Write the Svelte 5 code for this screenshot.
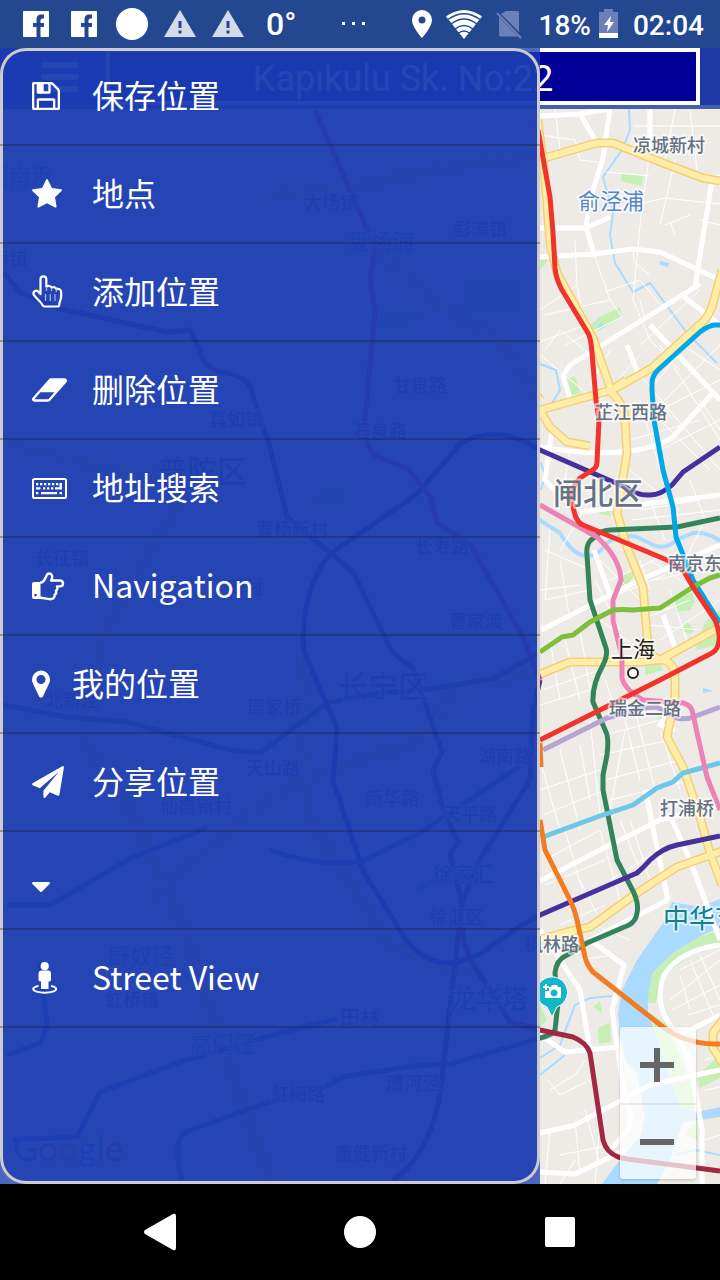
<script>
  const items = [
    { label: '保存位置', icon: 'save' },
    { label: '地点', icon: 'star' },
    { label: '添加位置', icon: 'pointer' },
    { label: '删除位置', icon: 'eraser' },
    { label: '地址搜索', icon: 'keyboard' },
    { label: 'Navigation', icon: 'hand' },
    { label: '我的位置', icon: 'marker' },
    { label: '分享位置', icon: 'plane' },
    { label: '', icon: 'caret' },
    { label: 'Street View', icon: 'street' }
  ];

  const icons = {
    save: { w: 28, h: 28, box: '128 128 1536 1536', d: 'M512 1536h768v-384h-768v384zm896 0h128v-896q0-14-10-38.5t-20-34.5l-281-281q-10-10-34-20t-39-10v416q0 40-28 68t-68 28h-576q-40 0-68-28t-28-68v-416h-128v1280h128v-416q0-40 28-68t68-28h832q40 0 68 28t28 68v416zm-384-928v-320q0-13-9.5-22.5t-22.5-9.5h-192q-13 0-22.5 9.5t-9.5 22.5v320q0 13 9.5 22.5t22.5 9.5h192q13 0 22.5-9.5t9.5-22.5zm640 32v928q0 40-28 68t-68 28h-1344q-40 0-68-28t-28-68v-1344q0-40 28-68t68-28h928q40 0 88 20t76 48l280 280q28 28 48 76t20 88z' },
    star: { w: 30, h: 30, box: '64 32 1664 1664', d: 'M1728 647q0 22-26 48l-363 354 86 500q1 7 1 20 0 21-10.5 35.5t-30.5 14.5q-19 0-40-12l-449-236-449 236q-22 12-40 12-21 0-31.5-14.5t-10.5-35.5q0-6 2-20l86-500-364-354q-25-27-25-48 0-37 56-46l502-73 225-455q19-41 49-41t49 41l225 455 502 73q56 9 56 46z' },
    eraser: { w: 35, h: 24, box: '-64 256 1920 1280', d: 'M832 1408l336-384h-768l-336 384h768zm1013-1077q15 34 9.5 71.5t-30.5 65.5l-896 1024q-38 44-96 44h-768q-38 0-69.5-20.5t-47.5-54.5q-15-34-9.5-71.5t30.5-65.5l896-1024q38-44 96-44h768q38 0 69.5 20.5t47.5 54.5z' },
    marker: { w: 18, h: 28, box: '384 128 1024 1536', d: 'M1152 640q0-106-75-181t-181-75-181 75-75 181 75 181 181 75 181-75 75-181zm256 0q0 109-33 179l-364 774q-16 33-47.5 52t-67.5 19-67.5-19-46.5-52l-365-774q-33-70-33-179 0-212 150-362t362-150 362 150 150 362z' },
    plane: { w: 32, h: 32, box: '0 0 1792 1792', d: 'M1764 11q33 24 27 64l-256 1536q-5 29-32 45-14 8-31 8-11 0-24-5l-453-185-242 295q-18 23-49 23-13 0-22-4-19-7-30.5-23.5t-11.5-36.5v-349l864-1059-1069 925-395-162q-37-14-40-55-2-40 32-59l1664-960q15-9 32-9 20 0 36 11z' },
    caret: { w: 18, h: 10, box: '384 640 1024 576', d: 'M1408 704q0 26-19 45l-448 448q-19 19-45 19t-45-19l-448-448q-19-19-19-45t19-45 45-19h896q26 0 45 19t19 45z' }
  };

  const keys = [5, 9, 13, 17, 21, 25];

  // Transit lines: colour and route
  const transit = [
    ['#33845b', 'M720 518L677 527L610 530Q600 531 597 535L590 541Q586 546 587 555L590 600L606 648Q608 655 603 665Q592 685 593 702L606 732Q609 738 607 755L603 775V790L617 860L634 893Q639 905 637 913Q636 921 629 925L587 943L567 955Q556 960 555 973L558 1003L555 1030Q553 1035 540 1038L450 1064L413 1066L343 1077L325 1087L267 1103L190 1130Q180 1133 178 1145V1163L182 1180'],
    ['#33845b', 'M3 705L67 717L127 722L230 750L260 753L327 703L380 693L430 689L493 679L537 654'],
    ['#b4a5d2', 'M543 750L607 718L643 708L657 707Q667 714 677 718Q687 720 693 717L720 707'],
    ['#6fc7e8', 'M420 890L440 875M543 837L597 817L633 805Q643 798 657 788L673 782L683 773L720 763'],
    ['#45309c', 'M720 447L683 472L672 485Q661 495 650 495Q638 496 627 488L540 450Q497 422 460 444L417 494L330 554Q305 585 303 637Q303 650 305 654L337 728L333 780L363 871L403 935Q420 963 450 963Q470 960 483 952L517 928L540 915L637 873Q645 866 650 860Q663 848 677 845L720 836'],
    ['#5a2795', 'M3 272L20 292L57 308L167 332L190 330L200 350Q202 366 220 372Q243 375 250 386L270 448L287 517L353 572L385 637Q390 654 413 668L442 752L433 770L443 808L458 843L450 854L462 903L443 1068Q437 1150 393 1180'],
    ['#5a2795', 'M462 903L477 864L530 780L533 710L540 680'],
    ['#3c70c8', 'M7 905H50L133 857L207 828M270 850Q320 868 363 861L420 833L520 766M7 1055L40 1043L47 1027L40 963M13 1140L77 1137L100 1092L180 1062L280 1033L337 1019'],
    ['#e83a80', 'M315 110L350 190L375 248L370 279L375 313L365 417Q363 450 380 458L407 468L430 496L437 523L470 544L523 637L540 680'],
    ['#00a8e8', 'M720 325H714Q708 326 700 332L658 370Q652 376 652 383V390L654 420L663 470L673 507L676 537L693 580L720 623'],
    ['#ef82b5', 'M540 505L597 537Q620 558 621 580L613 600V620L622 657V678Q625 690 643 700L683 703Q690 705 692 710L707 777L720 810'],
    ['#7bbf3a', 'M540 652L562 637L573 635L590 622L613 610Q622 609 633 610L660 608L693 587L710 578L720 575'],
    ['#f1332b', 'M538 130L550 197L553 233L555 268Q556 279 562 290L588 333Q591 338 592 353L596 400L599 420L597 462Q597 468 591 471L580 478Q570 488 572 503L575 515Q578 523 583 525L667 560L683 570L693 587L715 620Q720 632 719 640Q718 650 712 653L660 680L540 740'],
    ['#f37b20', 'M540 743L541 767M540 820L545 850L570 900Q575 910 577 920L585 957Q587 965 593 972L663 1027Q673 1034 680 1037Q700 1045 720 1044'],
    ['#a12840', 'M462 928Q465 955 480 975L500 1005L510 1022L540 1030L573 1037Q587 1043 590 1053L593 1073L603 1140Q606 1152 618 1157L627 1159L697 1168L720 1171']
  ];

  const highways = [
    'M538 120L545 180L550 243L557 273L593 338L612 393Q625 405 625 420L627 453L617 513L627 547L643 587L648 647Q650 658 663 660Q675 663 675 677V697L667 737L683 767L700 817L710 853L722 885',
    'M538 160L565 152L597 143H613L663 163L703 178L720 181',
    'M722 271L712 307Q707 320 697 327L653 367Q635 378 612 390L540 410M612 390L626 380',
    'M541 412L550 427L567 442L590 446',
    'M538 675L570 662H640L660 660L722 626',
    'M538 940L567 932L590 927L637 893L677 867L722 851',
    'M724 1018L713 1033V1048L724 1065',
    'M270 196L350 188L430 170L540 155M375 248L430 300L500 340L540 400',
    'M0 440L160 480L180 500L100 640L88 750Q120 790 135 820L185 930L220 1040L270 1180',
    'M150 900L240 820L300 780L410 745L460 690L540 670M300 650L305 760L310 820L390 945L470 975'
  ];

  const streets = [
    'M540 116L580 114L610 109L603 158L590 200L586 227L594 254M580 114L596 141M540 228H586L610 217M540 257L594 254L633 249L660 252L720 280',
    'M720 175L711 186L695 287L570 365L563 376L570 398M570 365L700 284M683 296L720 325M650 325L720 400M627 345L640 379M650 109V150',
    'M540 447Q630 462 672 438L712 394M552 430L545 480L570 505M580 512L720 495M594 550L612 600M541 630L640 580L720 545M663 615L678 655',
    'M540 881L600 850L640 830L660 820L720 805M645 790L668 900M672 820L690 860L705 900L720 940M668 900L590 940M675 700L660 725L675 730',
    'M540 930L580 990L590 1050M590 940L624 965L612 1010L625 1100Q635 1115 628 1130L610 1150M540 1035L565 1052L620 1047M540 1133L575 1125L650 1085L720 1070M540 1172L575 1174L625 1150',
    'M720 945Q680 950 664 975Q655 1000 667 1020L690 1060L702 1130V1184M680 1035L720 1015',
    'M300 140L420 125L540 118M290 300L440 330L540 345M430 310L420 420L440 470M280 350L360 370L470 400L540 410M330 590L400 620L480 610M60 360L200 390L280 400M100 150L95 260L60 500L80 620M230 230L210 350L160 440'
  ];

  const alleys = [
    'M555 109L560 150M634 126H720M675 109L665 160M690 110L697 170M540 135L575 140L580 160L597 162M606 172L650 176M650 150L640 225L633 300M675 160L660 225M613 210L665 198L720 204',
    'M575 240L577 285L540 310M594 254L610 300L622 317M633 249L634 262L650 275M665 225L690 215M605 292L640 280L665 310M610 300L545 315M700 220L720 225M670 222L675 235M577 285L585 325L540 342',
    'M597 360L560 330L545 350M622 317L565 345M633 300L650 340L680 370M640 345L700 290M610 350L590 385M540 355L595 400M640 300L645 320',
    'M640 355L600 400M660 345L720 440M675 340L720 370M690 340L650 390M720 345L655 410M720 380L640 420M700 400L720 430M640 375L720 470M660 420L710 470M630 440L700 420M660 450L720 420',
    'M640 400L660 470M630 470L680 510M640 510L700 500M650 500L665 540M690 480L705 520L685 560M632 520L720 510M570 450L565 480M590 500L560 550M545 550L590 570M550 530L545 600L590 590M560 560L570 620M540 590L580 585',
    'M600 560L640 600M595 580L620 630M605 600L665 575M610 580L655 560M640 560L650 590M620 550L640 545M650 560L710 600M655 580L700 570M640 620L690 600M670 590L690 650M650 625L700 630M660 640L720 600M600 620L640 650',
    'M550 640L560 700M565 640L580 700M580 630L590 690M543 690L600 670M540 705L590 690M605 680L620 720M620 700L640 780M635 710L655 790M605 735L660 720M600 755L670 740M605 780L680 760M610 800L690 780M660 730L680 790',
    'M540 760L560 830M560 750L580 830M580 745L590 800M540 790L600 770M543 815L605 790M600 830L620 900M565 830L585 900M545 860L600 830M545 885L605 860M580 880L600 920M620 820L640 870M650 800L660 860M610 880L660 850',
    'M590 720L600 815M625 730L610 810M630 820L650 880M605 905L560 925M595 925L630 940M550 1090L575 1075L585 1060M548 1080L560 1095L590 1080M550 1130L545 1184M575 1120L580 1175M585 1110L600 1165M560 1155L610 1145M575 1160L560 1184M600 1120L595 1184',
    'M680 970L720 950M670 1000L720 960M672 1010L720 985M680 975L690 1010M690 960L715 1020M700 955L720 1000M688 1015L720 1005M705 1060L720 1055M705 1090L720 1087M705 1140L720 1135M540 950L570 945M580 960L612 955'
  ];

  const labels = [
    [633, 152, '凉城新村'], [578, 209, '俞泾浦', 22, 'water'], [595, 419, '芷江西路'],
    [553, 504, '闸北区', 30], [668, 570, '南京东路'], [611, 657, '上海', 22, 'city'],
    [609, 715, '瑞金二路'], [660, 815, '打浦桥'], [663, 928, '中华艺术宫', 26, 'sight'],
    [525, 951, '枫林路'], [-13, 184, '河南浜', 22, 'water'], [-27, 266, '江桥镇'],
    [304, 209, '大场镇'], [348, 249, '夏扬浦', 22, 'water'], [453, 236, '彭浦镇'],
    [393, 392, '甘泉路'], [353, 438, '石泉路'], [209, 426, '真如镇'],
    [157, 482, '普陀区', 30], [256, 536, '曹杨新村'], [35, 565, '长征镇'],
    [415, 553, '长寿路'], [227, 594, '新村'], [449, 628, '曹家渡'],
    [338, 697, '长宁区', 30], [45, 707, '北新泾'], [247, 714, '周家桥'],
    [478, 763, '湖南路'], [246, 775, '天山路'], [365, 805, '新华路'],
    [160, 813, '仙霞新村'], [443, 821, '天平路'], [433, 882, '徐家汇', 20, 'shop'],
    [430, 924, '徐汇区'], [108, 964, '野奴泾', 22, 'water'], [105, 1007, '虹桥镇'],
    [450, 1008, '龙华塔', 26, 'sight'], [340, 1025, '田林', 20], [190, 1052, '高门泾', 22, 'water'],
    [386, 1090, '漕河泾'], [271, 1101, '虹梅路'], [335, 1160, '康健新村']
  ];
</script>

<div class="screen">
  <header class="status">
    <div class="group notices">
      {#each [0, 1] as n (n)}
        <svg width="26" height="26" viewBox="0 0 26 26" aria-hidden="true"><path fill="#fff" d="M0 0H26V26H17.500V16H21V12H17.500V9.500Q17.500 7.500 19.500 7.500H21V3.500H18Q13.500 3.500 13.500 8.500V12H10V16H13.500V26H0z" /></svg>
      {/each}
      <svg class="dot" width="32" height="32" viewBox="0 0 32 32" aria-hidden="true"><circle cx="16" cy="16" r="16" fill="#fff" /></svg>
      {#each [0, 1] as n (n)}
        <svg class="warn" width="32" height="28" viewBox="0 0 32 28" aria-hidden="true"><path fill="#fff" fill-opacity=".8" fill-rule="evenodd" d="M16 0L32 27H0zM14.500 11V18H17.500V11zM14.500 20.500V23.500H17.500V20.500z" /></svg>
      {/each}
      <span class="temp">0°</span>
    </div>
    <svg class="more" width="24" height="4" viewBox="0 0 24 4" aria-hidden="true"><path fill="#fff" d="M0 0h3v3H0zM10 0h3v3h-3zM20 0h3v3h-3z" /></svg>
    <div class="group system">
      <svg width="20" height="28" viewBox="0 0 20 28" aria-hidden="true"><path fill="#fff" fill-rule="evenodd" d="M10 0A10 10 0 0 0 0 10C0 17 10 28 10 28S20 17 20 10A10 10 0 0 0 10 0zM10 6.500a3.500 3.500 0 1 1 0 7a3.500 3.500 0 0 1 0-7z" /></svg>
      <svg width="36" height="29" viewBox="0 0 36 29" aria-hidden="true">
        <path fill="#fff" d="M18 29L0 6.500Q18-6.500 36 6.500z" />
        <g fill="none" stroke="#244890" stroke-width="1.500"><path d="M2 9.500Q18-2 34 9.500M5 14Q18 4 31 14M9 19Q18 12 27 19M12 23.500Q18 18.500 24 23.500" /></g>
      </svg>
      <svg width="28" height="30" viewBox="0 0 28 30" aria-hidden="true"><path fill="#6b80b9" d="M10 2H21Q23 2 23 4V23L5 5zM3 8L22 27.500H5Q3 27.500 3 25.500z" /><path d="M1 4L25 29" stroke="#6b80b9" stroke-width="2" /></svg>
      <span class="battery">18%</span>
      <svg width="20" height="30" viewBox="0 0 20 30" aria-hidden="true"><path fill="#6b80b9" d="M5 0h9v3h5v22H0V3h5z" /><path fill="#fff" d="M0 24h19v5H0zM12 7L5 16h4l-1 7 7-10h-4z" /></svg>
      <time>02:04</time>
    </div>
  </header>

  <div class="stage">
    <main class="app">
      <div class="bar">
        <button class="burger" aria-label="Menu"><i></i><i></i><i></i></button>
        <input class="address" aria-label="Address" value="Kapıkulu Sk. No:22" readonly />
      </div>
      <div class="map">
        <svg class="tiles" viewBox="0 109 720 1075" preserveAspectRatio="xMinYMin slice" lang="zh-CN">
          <rect y="109" width="720" height="1200" fill="#eeebe7" />
          <g fill="#c5efb5">
            <path d="M622 173L643 175L642 186L621 181zM586 328L600 317L620 307L622 317L600 330L590 333zM567 379L575 376L580 393L569 396zM540 260L549 259L540 270zM592 505L610 508L611 516L600 514zM624 575L635 571L630 583L620 588z" />
            <path d="M673 600L692 592L695 602L690 610L676 612zM680 630L687 622L695 630L690 634zM705 622L720 610V645L695 650zM645 665L660 662L663 670L645 675zM657 713L670 716L668 721H659z" />
            <path d="M648 1003V975L670 955L697 938L720 930V946L690 955L665 975L655 1003zM598 1028L610 1023L611 1042L599 1044zM540 1005L547 1020L540 1027zM650 1013L667 1024L690 1080L695 1110L680 1107zM697 1076L720 1055V1078L700 1088zM685 1135L697 1120V1140zM593 1007L600 1001L602 1013z" />
            <path d="M380 310H420V330H380zM470 280H520V310H460zM320 490H345V505H315z" />
          </g>
          <path fill="#aadaff" d="M720 899L700 907L672 902L663 923L637 960L622 990L618 1013L620 1037L627 1063L637 1073L645 1117L640 1137L620 1160L602 1184H657L670 1160L683 1122L720 1117V1107L697 1112L680 1107L670 1077L658 1040L648 1013V997L652 973L673 953L697 938L720 927zM660 261L669 263L668 267L660 265zM596 328L602 322L604 328zM703 688L714 691L703 693z" />
          <g fill="none" stroke="#aadaff" stroke-linejoin="round">
            <path stroke-width="2" d="M629 109L630 130L622 150L603 177L613 213L610 235L615 263L633 292L650 283L687 333L717 363M540 364L556 370L560 390L548 410M541 463L545 475L541 490M540 1058L560 1045L575 1005L590 998L612 996M540 1075L565 1055M675 1155L695 1150L720 1155" />
            <path stroke-width="4" d="M538 519L560 533Q572 553 582 555Q596 559 605 545Q616 533 637 537L655 546Q668 549 676 540L693 533Q706 531 720 541" />
          </g>
          <g fill="none" stroke="#fff" stroke-linejoin="round">
            <g stroke-width="1">{#each alleys as d (d)}<path {d} />{/each}</g>
            <g stroke-width="5">{#each streets as d (d)}<path {d} />{/each}</g>
          </g>
          <g fill="none" stroke="#f5cf72" stroke-width="9" stroke-linejoin="round">{#each highways as d (d)}<path {d} />{/each}</g>
          <g fill="none" stroke="#ffeeaa" stroke-width="6" stroke-linejoin="round">{#each highways as d (d)}<path {d} />{/each}</g>
          <g fill="none" stroke-width="5" stroke-linejoin="round">{#each transit as [stroke, d] (d)}<path {stroke} {d} />{/each}</g>
          <g class="labels">
            {#each labels as [x, y, name, size = 18, kind = 'area'] (name)}
              <text {x} {y} font-size={size} class={kind}>{name}</text>
            {/each}
          </g>
          <circle cx="633" cy="673" r="5" fill="#fff" stroke="#222" stroke-width="2" />
          <path fill="#12b5cb" stroke="#fff" stroke-width="1" d="M552 1017L547 1007A15.500 15.500 0 1 1 557 1007z" />
          <path fill="#fff" fill-rule="evenodd" d="M549 987H551L552 985H557L558 987H561V998H545V991H549zM554 989.500a3.500 3.500 0 1 0 .1 0zM545 984h2v2h2v2h-2v2h-2v-2h-2v-2h2z" />
          <text class="brand" x="13" y="1161"><tspan fill="#4285f4">G</tspan><tspan fill="#ea4335">o</tspan><tspan fill="#fbbc05">o</tspan><tspan fill="#4285f4">g</tspan><tspan fill="#34a853">l</tspan><tspan fill="#ea4335">e</tspan></text>
        </svg>
        <div class="zoom">
          <button aria-label="Zoom in"><svg width="34" height="34" viewBox="0 0 34 34"><path fill="#666" d="M14 0h6v14h14v6H20v14h-6V20H0v-6h14z" /></svg></button>
          <button aria-label="Zoom out"><svg width="34" height="34" viewBox="0 0 34 34"><path fill="#666" d="M0 14h34v6H0z" /></svg></button>
        </div>
      </div>
    </main>

    <nav class="drawer" lang="zh-CN">
      <ul>
        {#each items as { label, icon } (icon)}
          <li>
            <button class="item" aria-label={label || 'More'}>
              <span class="icon" class:slim={icon === 'marker' || icon === 'caret'} class:low={icon === 'caret'}>
                {#if icon === 'pointer'}
                  <svg width="31" height="34" viewBox="0 0 31 34">
                    <path fill="none" stroke="#fff" stroke-width="2.200" stroke-linejoin="round" d="M8.500 19V4.200a2.900 2.900 0 0 1 5.800 0V11.500C16 10.500 18.800 10.700 19.600 12.600C21.500 11.600 23.800 12.200 24.400 14.100C27 13.400 29.200 14.600 29.200 17.500V21C29.200 25 27.300 26.500 27.300 29.500Q27.300 31.500 25.500 31.500H12.500Q11 31.500 10.500 30C9.500 27.500 4.500 23.500 1.800 19.800C.4 17 3.500 14.500 5.800 16.200z" />
                    <path stroke="#a9b5e3" stroke-width="1.200" d="M13.500 19V26M18.300 19V26M23 19V26M14.500 12V16M19.500 13V16M24.300 14V17" />
                  </svg>
                {:else if icon === 'keyboard'}
                  <svg width="35" height="21" viewBox="0 0 35 21">
                    <rect x="1" y="1" width="33" height="19" rx="1.500" fill="none" stroke="#fff" stroke-width="2" />
                    {#each keys as x (x)}<path fill="#fff" d="M{x - 1} 5h2.300v2.300h-2.300z" />{/each}
                    <path fill="#fff" d="M4 9.300h4.500v2.300H4zM11 9.300h2.300v2.300H11zM15 9.300h2.300v2.300H15zM19 9.300h2.300v2.300H19zM23 9.300h4.500V5h2.500v6.600h-7zM4 14h2.300v2.300H4zM9 14h16v2.300H9zM27.500 14h2.500v2.300h-2.500z" />
                  </svg>
                {:else if icon === 'hand'}
                  <svg width="33" height="29" viewBox="0 0 33 29">
                    <path fill="#fff" fill-rule="evenodd" d="M2 10h6.500v17H2q-2 0-2-2V12q0-2 2-2zM3.500 21.700a1.300 1.300 0 1 0 .1 0z" />
                    <path fill="none" stroke="#fff" stroke-width="2.400" stroke-linejoin="round" d="M8 10.500h1.500C12 10 13 6.500 14.200 4.500C14.800 3 15.200 1.500 17 1.500C19.500 1.500 20.700 3.500 20 6L19.200 8.500H28Q31 8.800 31 11.500T28 14.400H25C25.900 16 25.400 17.800 24 18.500C24.600 20.500 24 22 22.600 22.700C22.900 25.800 21 27.200 18.200 27.200C14 27.200 12 25.700 8 25.700" />
                  </svg>
                {:else if icon === 'street'}
                  <svg width="26" height="32" viewBox="0 0 26 32">
                    <circle cx="12.700" cy="4.200" r="4.100" fill="#fff" />
                    <ellipse cx="12.700" cy="27" rx="11.500" ry="3.800" fill="none" stroke="#fff" stroke-width="1.900" />
                    <path fill="#2541b2" d="M6.500 21H19v6H6.500z" />
                    <path fill="#fff" d="M9.500 8.500h6.500q3 0 3 3V18q0 1.500-2.500 1.500V27H9V19.500Q6.500 19.500 6.500 18V11.500q0-3 3-3z" />
                  </svg>
                {:else}
                  <svg width={icons[icon].w} height={icons[icon].h} viewBox={icons[icon].box}><path fill="#fff" d={icons[icon].d} /></svg>
                {/if}
              </span>
              <span class="label">{label}</span>
            </button>
          </li>
        {/each}
      </ul>
    </nav>
  </div>

  <footer class="keys">
    <button aria-label="Back"><svg width="32" height="38" viewBox="0 0 32 38"><path fill="#fff" d="M1 17L29 1Q32 0 32 3V35Q32 38 29 37L1 21Q-1 19 1 17z" /></svg></button>
    <button aria-label="Home"><svg width="32" height="32" viewBox="0 0 32 32"><circle cx="16" cy="16" r="16" fill="#fff" /></svg></button>
    <button aria-label="Recent apps"><svg width="30" height="30" viewBox="0 0 30 30"><rect width="30" height="30" rx="2" fill="#fff" /></svg></button>
  </footer>
</div>

<style>
  :global(body) { margin: 0; background: #000; }
  .screen {
    display: flex;
    flex-direction: column;
    min-height: 100vh;
    font-family: Roboto, sans-serif;
    color: #fff;
  }
  svg { display: block; flex: none; }
  button { border: 0; padding: 0; margin: 0; background: none; color: inherit; font: inherit; cursor: pointer; }

  .status {
    display: flex;
    align-items: center;
    height: 48px;
    padding: 0 16px 0 23px;
    background: #244890;
    font-size: 28px;
    font-weight: 500;
  }
  .group { display: flex; align-items: center; }
  .notices { gap: 22px; }
  .dot { margin: 0 -6px 0 -3px; }
  .warn + .warn { margin-left: -6px; }
  .temp { font-size: 32px; }
  .more { margin: 0 auto; }
  .system { gap: 14px; }
  .battery { margin-right: -6px; }
  .system span, .system time { padding-top: 2px; }

  .stage { flex: 1; display: grid; }
  .app, .drawer { grid-area: 1 / 1; }
  .app { display: flex; flex-direction: column; }
  .bar {
    display: grid;
    grid-template-columns: 106px 1fr;
    height: 57px;
    padding-right: 20px;
    background: #1c38a4;
    border-bottom: 4px solid #4460a8;
  }
  .burger { display: grid; gap: 6px; width: 38px; align-content: center; justify-self: center; margin-left: 14px; }
  .burger i { width: 38px; height: 6px; border-radius: 3px; background: #fff; }
  .address {
    box-sizing: border-box;
    width: 100%;
    height: 57px;
    border: 4px solid #fff;
    padding: 4px 0 0;
    background: #000099;
    color: #fff;
    font: 36px Roboto, sans-serif;
    text-align: center;
    outline: none;
  }
  .map { position: relative; flex: 1; overflow: hidden; background: #eeebe7; }
  .tiles { position: absolute; inset: 0; width: 100%; height: 100%; }
  .labels {
    font-family: "Noto Sans CJK SC", sans-serif;
    font-weight: 500;
    paint-order: stroke;
    stroke: #fff9;
    stroke-width: 4px;
    stroke-linejoin: round;
  }
  .area { fill: #647283; }
  .water { fill: #5288cb; font-weight: 400; }
  .city { fill: #222; font-weight: 400; }
  .sight { fill: #11808c; font-weight: 400; }
  .shop { fill: #4a78b8; }
  .brand { font: 500 35px Lato, sans-serif; }
  .zoom {
    position: absolute;
    right: 24px;
    bottom: 5px;
    width: 76px;
    background: #ffffffb8;
    border-radius: 3px;
    box-shadow: 0 1px 3px #0003;
  }
  .zoom button { display: grid; place-items: center; width: 100%; height: 76px; padding-right: 2px; }
  .zoom button + button { border-top: 2px solid #0001; }

  .drawer { width: 75%; background: #1b3cb1c4; z-index: 1; }
  .drawer ul {
    box-sizing: border-box;
    height: 100%;
    margin: 0;
    padding: 0;
    list-style: none;
    overflow: hidden;
    background: #1b3cb1c8;
    border-radius: 26px;
    box-shadow: inset 0 0 0 3px #ccc;
  }
  .item {
    box-sizing: border-box;
    display: flex;
    align-items: center;
    gap: 20px;
    width: 100%;
    height: 98px;
    padding: 0 32px;
    border-bottom: 2px solid #1a1a1a4d;
    font: 32px "Noto Sans CJK SC", sans-serif;
    text-align: left;
  }
  .icon { width: 40px; }
  .slim { width: 20px; }
  .low { padding-top: 14px; }
  .label { padding-bottom: 5px; }

  .keys {
    display: grid;
    grid-template-columns: repeat(3, 200px);
    justify-content: center;
    height: 96px;
    background: #000;
  }
  .keys button { display: grid; place-items: center; }
</style>
